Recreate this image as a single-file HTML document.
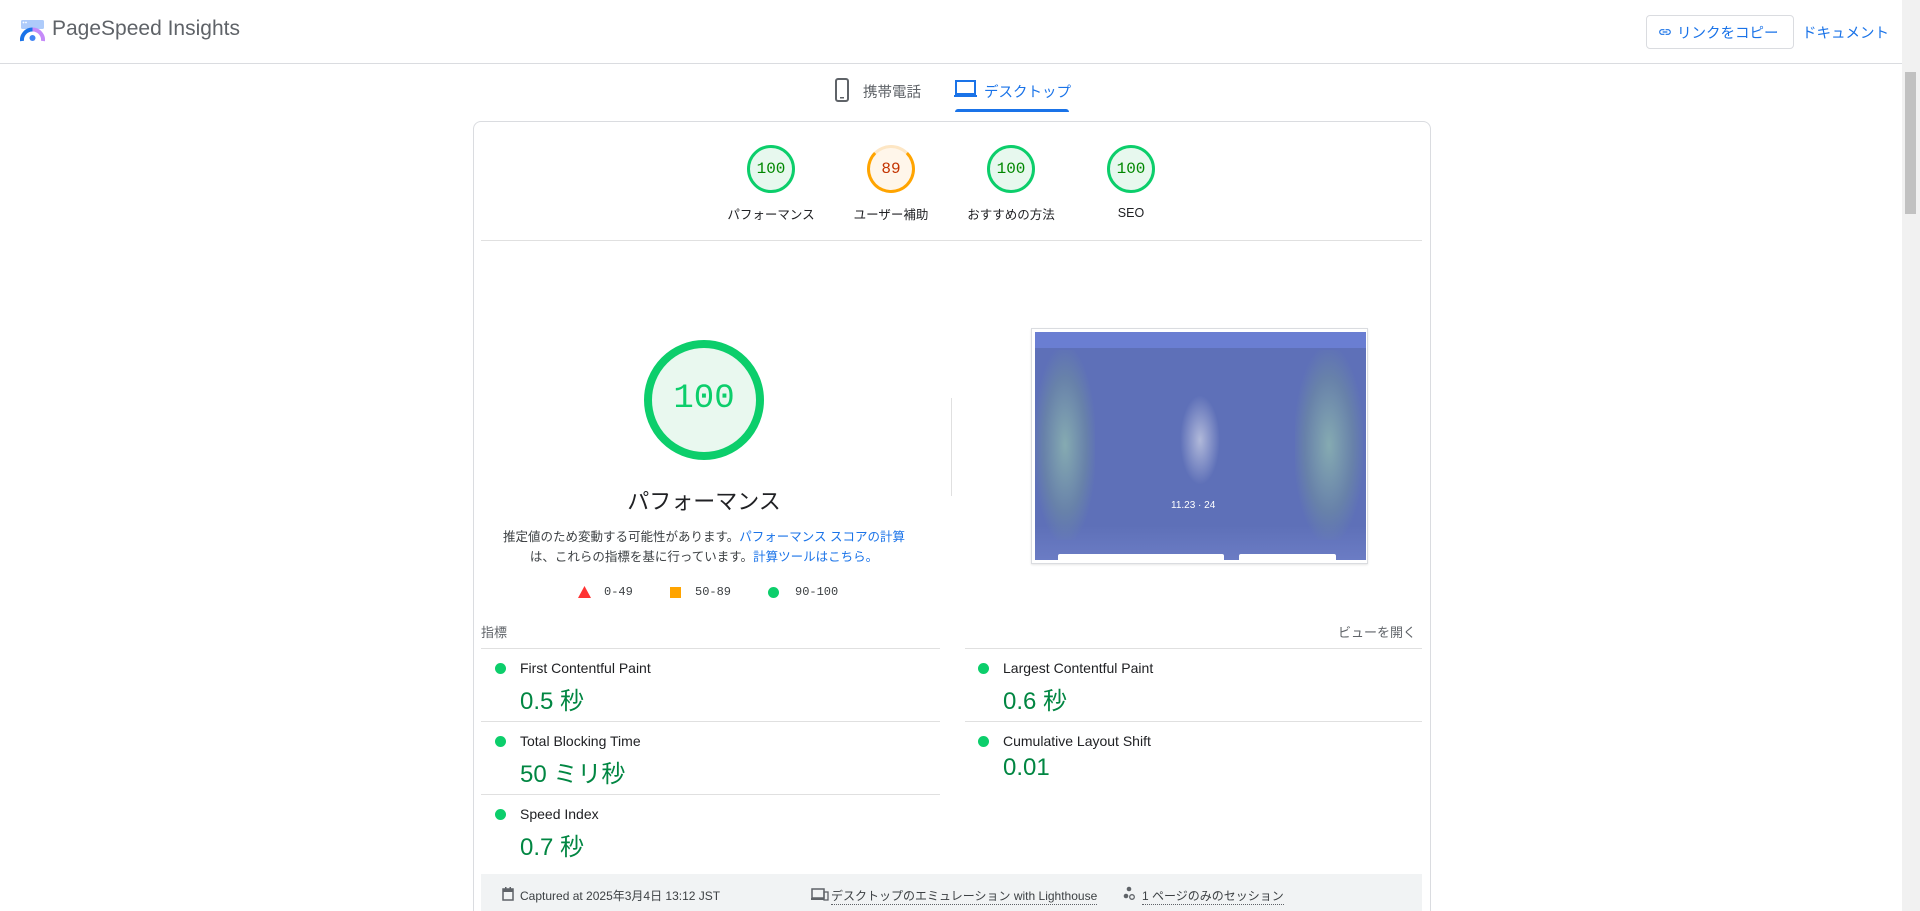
<!DOCTYPE html>
<html><head><meta charset="utf-8"><style>
*{margin:0;padding:0;box-sizing:border-box}
html,body{width:1920px;height:911px;overflow:hidden}
body{background:#fff;font-family:"Liberation Sans","Noto Sans CJK JP",sans-serif;color:#202124;position:relative}
.a{position:absolute;white-space:nowrap}
.hdr{position:absolute;left:0;top:0;width:1902px;height:64px;border-bottom:1px solid #dadce0;background:#fff}
.sb{position:absolute;left:1902px;top:0;width:18px;height:911px;background:#f1f1f1}
.sbt{position:absolute;left:1905px;top:72px;width:11px;height:142px;background:#c1c1c1}
.card{position:absolute;left:473px;top:121px;width:958px;height:800px;border:1px solid #dadce0;border-radius:8px}
.g{position:absolute;width:48px;height:48px;border-radius:50%;font-family:"Liberation Mono",monospace;font-size:16px;text-align:center;line-height:42px}
.gl{position:absolute;font-size:12.5px;color:#202124;transform:translateX(-50%)}
.sep{position:absolute;height:1px;background:#e0e0e0}
.dot{position:absolute;width:11px;height:11px;border-radius:50%;background:#0cce6b}
.mt{position:absolute;font-size:14px;color:#202124}
.mv{position:absolute;font-size:24px;color:#018642}
.ft{position:absolute;font-size:12px;color:#3c4043}
</style></head><body>
<div class="hdr"></div>
<svg class="a" style="left:20px;top:20px" width="25" height="23" viewBox="0 0 25 23">
<rect x="1" y="0" width="23" height="9" rx="1.5" fill="#aecbfa"/>
<circle cx="3.5" cy="2.5" r="0.9" fill="#fff"/><circle cx="6" cy="2.5" r="0.9" fill="#fff"/>
<path d="M2 21 A10.5 10.5 0 0 1 12.5 9.5" stroke="#1a73e8" stroke-width="4" fill="none"/>
<path d="M12.5 9.5 A10.5 10.5 0 0 1 23 21" stroke="#c58af9" stroke-width="4" fill="none"/>
<circle cx="12.5" cy="18" r="3" fill="#4285f4"/>
</svg>
<div class="a" style="left:52px;top:17px;font-size:21px;color:#5f6368">PageSpeed Insights</div>
<div class="a" style="left:1646px;top:15px;width:148px;height:34px;border:1px solid #dadce0;border-radius:4px"></div>
<svg class="a" style="left:1658px;top:25px" width="14" height="14" viewBox="0 0 24 24"><path d="M3.9 12c0-1.7 1.4-3.1 3.1-3.1h4V7H7c-2.8 0-5 2.2-5 5s2.2 5 5 5h4v-1.9H7c-1.7 0-3.1-1.4-3.1-3.1zM8 13h8v-2H8v2zm9-6h-4v1.9h4c1.7 0 3.1 1.4 3.1 3.1s-1.4 3.1-3.1 3.1h-4V17h4c2.8 0 5-2.2 5-5s-2.2-5-5-5z" fill="#1a73e8"/></svg>
<div class="a" style="left:1677px;top:22px;font-size:14.5px;color:#1a73e8">リンクをコピー</div>
<div class="a" style="left:1802px;top:22px;font-size:14.5px;color:#1a73e8">ドキュメント</div>
<div class="sb"></div><div class="sbt"></div>

<svg class="a" style="left:834px;top:78px" width="16" height="24" viewBox="0 0 16 24"><rect x="2" y="1" width="12" height="22" rx="2" fill="none" stroke="#5f6368" stroke-width="2"/><rect x="6" y="19" width="4" height="1.5" fill="#5f6368"/></svg>
<div class="a" style="left:863px;top:81px;font-size:14.5px;color:#5f6368">携帯電話</div>
<svg class="a" style="left:954px;top:80px" width="23" height="18" viewBox="0 0 23 18"><rect x="2" y="1" width="19" height="13" fill="none" stroke="#1a73e8" stroke-width="2"/><rect x="0" y="15" width="23" height="2" fill="#1a73e8"/></svg>
<div class="a" style="left:984px;top:81px;font-size:14.5px;color:#1a73e8">デスクトップ</div>
<div class="a" style="left:955px;top:109px;width:114px;height:3px;background:#1a73e8;border-radius:3px 3px 0 0"></div>

<div class="card"></div>
<div class="g" style="left:747px;top:145px;border:3px solid #0cce6b;background:#e7f8ee;color:#008800">100</div>
<div class="g" style="left:867px;top:145px;border:3px solid #ffa400;background:#fff6ea;color:#c33300;border-top-color:#fde6c4">89</div>
<div class="g" style="left:987px;top:145px;border:3px solid #0cce6b;background:#e7f8ee;color:#008800">100</div>
<div class="g" style="left:1107px;top:145px;border:3px solid #0cce6b;background:#e7f8ee;color:#008800">100</div>
<div class="gl" style="left:771px;top:204px">パフォーマンス</div>
<div class="gl" style="left:891px;top:204px">ユーザー補助</div>
<div class="gl" style="left:1011px;top:204px">おすすめの方法</div>
<div class="gl" style="left:1131px;top:206px">SEO</div>
<div class="sep" style="left:481px;top:240px;width:941px"></div>

<div class="a" style="left:644px;top:340px;width:120px;height:120px;border-radius:50%;border:8px solid #0cce6b;background:#e9f8ef;font-family:'Liberation Mono',monospace;font-size:34px;color:#0cce6b;text-align:center;line-height:102px">100</div>
<div class="a" style="left:704px;top:484px;font-size:22px;transform:translateX(-50%)">パフォーマンス</div>
<div class="a" style="left:704px;top:526px;font-size:12.5px;color:#3c4043;transform:translateX(-50%)">推定値のため変動する可能性があります。<span style="color:#1a73e8">パフォーマンス スコアの計算</span></div>
<div class="a" style="left:704px;top:546px;font-size:12.5px;color:#3c4043;transform:translateX(-50%)">は、これらの指標を基に行っています。<span style="color:#1a73e8">計算ツールはこちら。</span></div>
<svg class="a" style="left:578px;top:586px" width="13" height="12"><polygon points="6.5,0 13,12 0,12" fill="#ff3333"/></svg>
<div class="a" style="left:604px;top:585px;font-size:12px;color:#3c4043;font-family:'Liberation Mono',monospace">0-49</div>
<div class="a" style="left:670px;top:587px;width:11px;height:11px;background:#ffa400"></div>
<div class="a" style="left:695px;top:585px;font-size:12px;color:#3c4043;font-family:'Liberation Mono',monospace">50-89</div>
<div class="dot" style="left:768px;top:587px"></div>
<div class="a" style="left:795px;top:585px;font-size:12px;color:#3c4043;font-family:'Liberation Mono',monospace">90-100</div>
<div class="a" style="left:951px;top:398px;width:1px;height:98px;background:#e0e0e0"></div>

<div class="a" style="left:1031px;top:328px;width:337px;height:236px;border:1px solid #dadce0;background:#fff;box-shadow:0 1px 2px rgba(0,0,0,.1)"></div>
<div class="a" style="left:1035px;top:332px;width:331px;height:228px;background:linear-gradient(#6a7ed2 0,#6a7ed2 16px,#5e70b8 16px,#5e70b8 85%,#6b7cc4 100%)"></div>
<div class="a" style="left:1035px;top:350px;width:60px;height:190px;background:radial-gradient(ellipse at center,#8fb9b0 0,#6a86a6 50%,transparent 75%);opacity:.8"></div>
<div class="a" style="left:1295px;top:350px;width:68px;height:190px;background:radial-gradient(ellipse at center,#8fb9b0 0,#6a86a6 50%,transparent 75%);opacity:.8"></div>
<div class="a" style="left:1180px;top:395px;width:40px;height:90px;background:radial-gradient(ellipse,#d4d8e8 0,transparent 70%);opacity:.7"></div>
<div class="a" style="left:1171px;top:500px;font-size:10px;color:#fff">11.23 · 24</div>
<div class="a" style="left:1058px;top:554px;width:166px;height:6px;background:#fff;border-radius:2px 2px 0 0"></div>
<div class="a" style="left:1239px;top:554px;width:97px;height:6px;background:#fff;border-radius:2px 2px 0 0"></div>

<div class="a" style="left:481px;top:622px;font-size:13px;color:#5f6368">指標</div>
<div class="a" style="left:1338px;top:622px;font-size:13px;color:#5f6368">ビューを開く</div>
<div class="sep" style="left:481px;top:648px;width:459px"></div>
<div class="sep" style="left:965px;top:648px;width:457px"></div>
<div class="sep" style="left:481px;top:721px;width:459px"></div>
<div class="sep" style="left:965px;top:721px;width:457px"></div>
<div class="sep" style="left:481px;top:794px;width:459px"></div>

<div class="dot" style="left:495px;top:663px"></div><div class="mt" style="left:520px;top:660px">First Contentful Paint</div><div class="mv" style="left:520px;top:681px">0.5 秒</div>
<div class="dot" style="left:978px;top:663px"></div><div class="mt" style="left:1003px;top:660px">Largest Contentful Paint</div><div class="mv" style="left:1003px;top:681px">0.6 秒</div>
<div class="dot" style="left:495px;top:736px"></div><div class="mt" style="left:520px;top:733px">Total Blocking Time</div><div class="mv" style="left:520px;top:754px">50 ミリ秒</div>
<div class="dot" style="left:978px;top:736px"></div><div class="mt" style="left:1003px;top:733px">Cumulative Layout Shift</div><div class="mv" style="left:1003px;top:754px">0.01</div>
<div class="dot" style="left:495px;top:809px"></div><div class="mt" style="left:520px;top:806px">Speed Index</div><div class="mv" style="left:520px;top:827px">0.7 秒</div>

<div class="a" style="left:481px;top:874px;width:941px;height:37px;background:#f1f3f4"></div>
<svg class="a" style="left:502px;top:887px" width="12" height="14" viewBox="0 0 12 14"><rect x="1" y="2" width="10" height="11" fill="none" stroke="#5f6368" stroke-width="1.5"/><rect x="1" y="2" width="10" height="3" fill="#5f6368"/><rect x="3" y="0" width="1.5" height="3" fill="#5f6368"/><rect x="7.5" y="0" width="1.5" height="3" fill="#5f6368"/></svg>
<div class="ft" style="left:520px;top:887px">Captured at 2025年3月4日 13:12 JST</div>
<svg class="a" style="left:811px;top:888px" width="18" height="13" viewBox="0 0 18 13"><rect x="1" y="1" width="12" height="9" fill="none" stroke="#5f6368" stroke-width="1.5"/><rect x="0" y="10" width="13" height="2" fill="#5f6368"/><rect x="13" y="4" width="4" height="8" fill="none" stroke="#5f6368" stroke-width="1.3"/></svg>
<div class="ft" style="left:831px;top:887px;border-bottom:1px dotted #5f6368">デスクトップのエミュレーション with Lighthouse</div>
<svg class="a" style="left:1123px;top:886px" width="12" height="15" viewBox="0 0 12 15"><circle cx="6" cy="3" r="2.3" fill="#5f6368"/><circle cx="3" cy="10" r="2.3" fill="#5f6368"/><circle cx="9" cy="11" r="2.3" fill="none" stroke="#5f6368" stroke-width="1.3"/></svg>
<div class="ft" style="left:1142px;top:887px;border-bottom:1px dotted #5f6368">1 ページのみのセッション</div>
</body></html>
